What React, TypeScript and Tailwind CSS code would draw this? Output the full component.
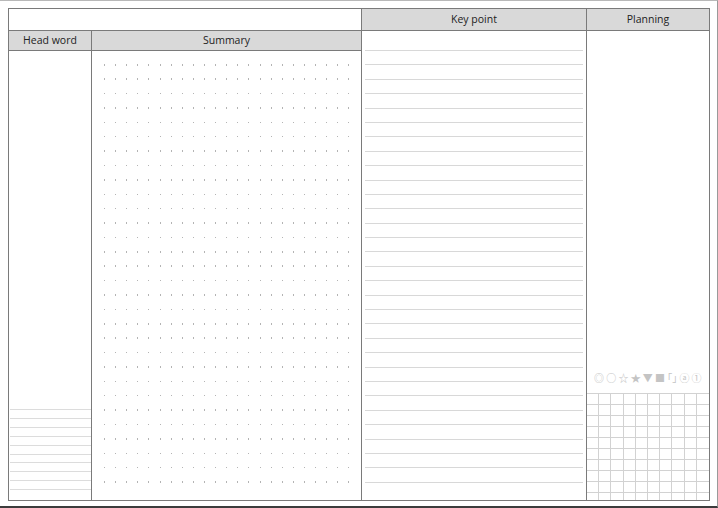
const keyLines = Array.from({ length: 31 }, (_, i) => i);
const dotRows = Array.from({ length: 30 }, (_, i) => i);
const dotCols = Array.from({ length: 23 }, (_, i) => i);
const headLines = Array.from({ length: 10 }, (_, i) => i);
const gridCells = Array.from({ length: 100 }, (_, i) => i);
const symbols = ['◎', '○', '☆', '★', '▼', '■', '｢｣', 'ⓐ', '①'];

function HeaderCell({ label, className = '' }: { label: string; className?: string }) {
  return (
    <div
      className={`flex items-center justify-center bg-[#d9d9d9] border-b border-[#7a7a7a] text-[10.5px] text-[#222] ${className}`}
    >
      {label}
    </div>
  );
}

export default function App() {
  return (
    <div
      className="w-[718px] h-[508px] bg-white border-t border-r border-b-2 border-t-[#b8b8b8] border-r-[#9a9a9a] border-b-[#3c3c3c] pl-2 pt-[7px]"
      style={{ fontFamily: '"Open Sans", "Noto Sans", sans-serif' }}
    >
      <div className="w-[702px] h-[493px] border border-[#7a7a7a] flex">
        {/* head word + summary */}
        <div className="w-[353px] border-r border-[#7a7a7a] flex flex-col">
          <div className="h-[22px] border-b border-[#7a7a7a]"></div>
          <div className="flex h-[20px]">
            <HeaderCell label="Head word" className="w-[83px] border-r h-full" />
            <HeaderCell label="Summary" className="flex-1 h-full" />
          </div>
          <div className="flex flex-1">
            <div className="w-[83px] border-r border-[#7a7a7a] flex flex-col justify-end pl-px pb-[2px]">
              {headLines.map((i) => (
                <div key={i} className="h-[8.9px] border-t border-[#dcdcdc]"></div>
              ))}
            </div>
            <div className="flex-1 pl-[12px] pt-[13px]">
              {dotRows.map((r) => (
                <div key={r} className="flex h-[14.4px]">
                  {dotCols.map((c) => (
                    <div key={c} className="w-[11.12px]">
                      <div className="w-px h-[1.5px] bg-[#b4b4b4]"></div>
                    </div>
                  ))}
                </div>
              ))}
            </div>
          </div>
        </div>

        {/* key point */}
        <div className="w-[225px] border-r border-[#7a7a7a] flex flex-col">
          <HeaderCell label="Key point" className="h-[22px]" />
          <div className="flex-1 px-[3px] pt-[19px]">
            {keyLines.map((i) => (
              <div key={i} className="h-[14.4px] border-t border-[#d8d8d8]"></div>
            ))}
          </div>
        </div>

        {/* planning */}
        <div className="flex-1 flex flex-col">
          <HeaderCell label="Planning" className="h-[22px]" />
          <div className="flex-1 flex flex-col justify-end">
            <div
              className="flex pl-[6px] h-[14px] items-center mb-[8px] text-[10px] leading-none text-[#c4c4c4]"
              style={{ fontFamily: '"Noto Sans CJK KR", "DejaVu Sans", sans-serif' }}
            >
              {symbols.map((s) => (
                <div key={s} className="w-[12.2px] flex justify-center whitespace-nowrap">
                  {s}
                </div>
              ))}
            </div>
            <div className="h-[107px] overflow-hidden grid grid-cols-10 grid-rows-[repeat(10,11px)]">
              {gridCells.map((i) => (
                <div
                  key={i}
                  className={`border-t border-[#d2d2d2] ${i % 10 === 9 ? '' : 'border-r'}`}
                ></div>
              ))}
            </div>
          </div>
        </div>
      </div>
    </div>
  );
}
